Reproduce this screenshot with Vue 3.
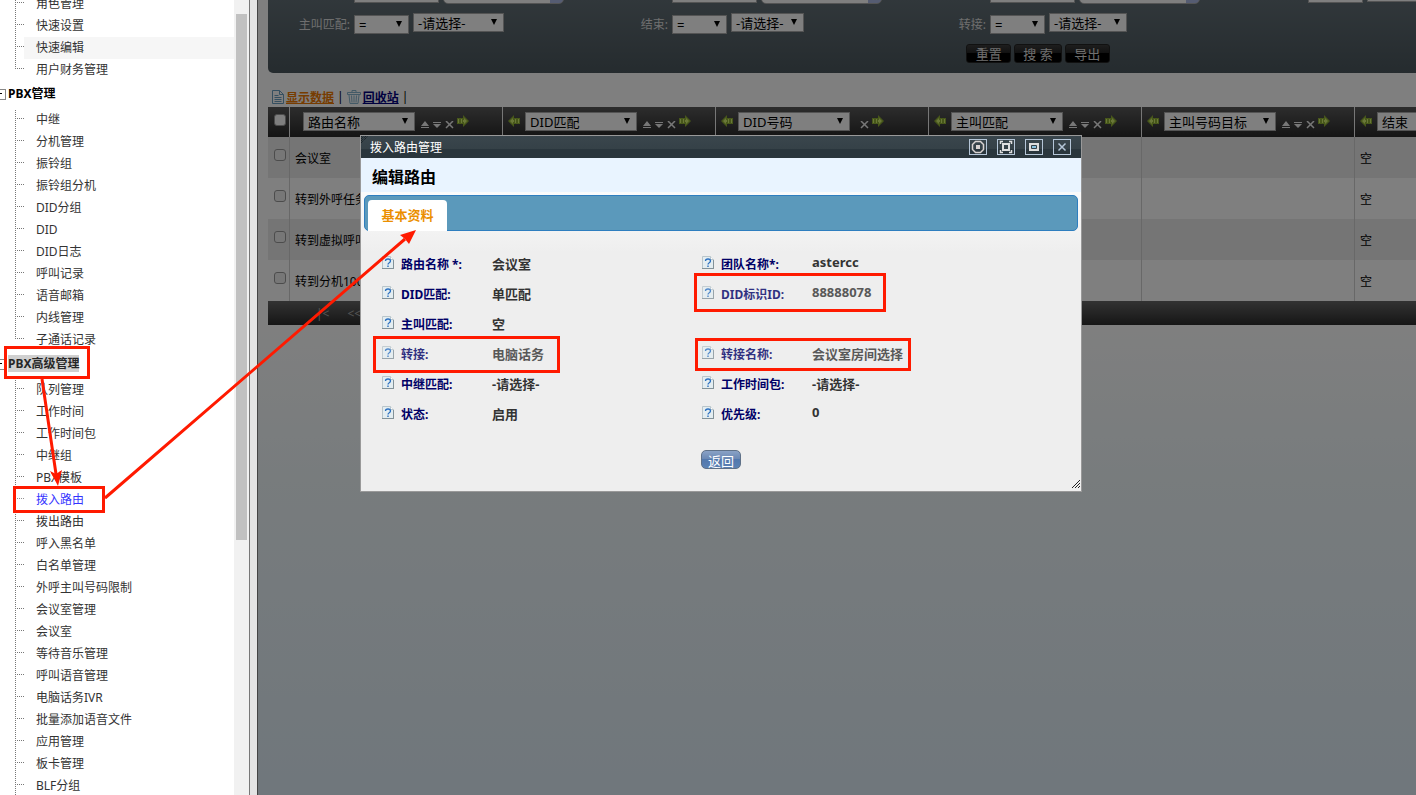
<script setup>
import { ref } from 'vue'

const menu = ref([
  {
    title: '',
    items: ['角色管理', '快速设置', '快速编辑', '用户财务管理'],
  },
  {
    title: 'PBX管理',
    items: [
      '中继', '分机管理', '振铃组', '振铃组分机', 'DID分组', 'DID',
      'DID日志', '呼叫记录', '语音邮箱', '内线管理', '子通话记录',
    ],
  },
  {
    title: 'PBX高级管理',
    selected: true,
    items: [
      '队列管理', '工作时间', '工作时间包', '中继组', 'PBX模板', '拨入路由', '拨出路由',
      '呼入黑名单', '白名单管理', '外呼主叫号码限制', '会议室管理', '会议室', '等待音乐管理',
      '呼叫语音管理', '电脑话务IVR', '批量添加语音文件', '应用管理', '板卡管理', 'BLF分组',
    ],
  },
])
const hovered = '快速编辑'
const active = '拨入路由'

const textFilters = [
  { id: 'name', label: '路由名称:' },
  { id: 'did', label: 'DID号码:' },
  { id: 'caller', label: '主叫号码:' },
]
const selectFilters = [
  { id: 'match', label: '主叫匹配:', size: 'wide' },
  { id: 'end', label: '结束:', size: 'narrow' },
  { id: 'transfer', label: '转接:', size: 'medium' },
]

const columns = [
  { name: '路由名称', sort: true },
  { name: 'DID匹配', back: true, sort: true },
  { name: 'DID号码', back: true },
  { name: '主叫匹配', back: true, sort: true },
  { name: '主叫号码目标', back: true, sort: true },
  { name: '结束', back: true, sort: true },
]
const rows = ['会议室', '转到外呼任务', '转到虚拟呼叫', '转到分机1001']

const fields = [
  { label: '路由名称 *:', value: '会议室' },
  { label: '团队名称*:', value: 'astercc', latin: true },
  { label: 'DID匹配:', value: '单匹配' },
  { label: 'DID标识ID:', value: '88888078', latin: true },
  { label: '主叫匹配:', value: '空' },
  null,
  { label: '转接:', value: '电脑话务' },
  { label: '转接名称:', value: '会议室房间选择' },
  { label: '中继匹配:', value: '-请选择-' },
  { label: '工作时间包:', value: '-请选择-' },
  { label: '状态:', value: '启用' },
  { label: '优先级:', value: '0', latin: true },
]
</script>

<template>
  <div class="page">
    <aside class="sidebar">
      <nav class="menu">
        <section v-for="(group, i) in menu" :key="i">
          <h3 v-if="group.title" class="group-title">
            <i class="toggle"></i>
            <span :class="{ selected: group.selected }">{{ group.title }}</span>
          </h3>
          <ul>
            <li v-for="item in group.items" :key="item" :class="{ hovered: item === hovered }">
              <a href="#" :class="{ active: item === active }">{{ item }}</a>
            </li>
          </ul>
        </section>
      </nav>
      <div class="scrollbar"><div class="thumb"></div></div>
    </aside>
    <div class="splitter"></div>

    <main class="main">
      <form class="filters" @submit.prevent>
        <div class="filter-grid filter-first">
          <div v-for="f in textFilters" :key="f.id" class="filter">
            <label :for="'op-' + f.id">{{ f.label }}</label>
            <span class="select op-wide">
              <select :id="'op-' + f.id"><option></option></select>
            </span>
            <span class="search-box">
              <input type="text" :aria-label="f.label" />
            </span>
          </div>
          <div class="filter">
            <label for="op-more"></label>
            <span class="select op"><select id="op-more"><option></option></select></span>
            <input class="plain" type="text" aria-label="值" />
          </div>
        </div>
        <div class="filter-grid">
          <div v-for="f in selectFilters" :key="f.id" class="filter">
            <label :for="'op-' + f.id">{{ f.label }}</label>
            <span class="select op">
              <select :id="'op-' + f.id"><option>=</option></select>
            </span>
            <span class="select" :class="f.size">
              <select :aria-label="f.label"><option>-请选择-</option></select>
            </span>
          </div>
        </div>
        <div class="filter-buttons">
          <button type="reset">重置</button>
          <button type="submit">搜 索</button>
          <button type="button">导出</button>
        </div>
      </form>

      <div class="links">
        <svg width="12" height="14" viewBox="0 0 12 14" fill="none" stroke="#6b9fc0">
          <path d="M.5.5h7l4 4v9H.5z M7.5.5v4h4 M2.5 5.5h4 M2.5 7.5h7 M2.5 9.5h7 M2.5 11.5h7" />
        </svg>
        <a href="#" class="current">显示数据</a>
        <span>|</span>
        <svg width="14" height="14" viewBox="0 0 14 14" fill="none" stroke="#86b4cf">
          <path d="M5 2V.5h4V2 M.5 2.5h13v2H.5z M2 5l1 8.500h8L12 5 M4.500 5.500l.5 7 M7 5.500v7 M9.500 5.500l-.5 7" />
        </svg>
        <a href="#">回收站</a>
        <span>|</span>
      </div>

      <table class="grid">
        <colgroup>
          <col class="col-check" />
          <col v-for="c in columns" :key="c.name" class="col-data" />
        </colgroup>
        <thead>
          <tr>
            <th><input type="checkbox" aria-label="全选" /></th>
            <th v-for="c in columns" :key="c.name">
              <div class="head" :class="{ first: !c.back }">
                <svg v-if="c.back" class="arrow" width="13" height="12" viewBox="0 0 13 12">
                  <path d="M0 6L6 0v3h6v6H6v3z" fill="#8fae35" />
                  <path d="M2 6l3-3v2h1v2H5v2z M7 4h1v4H7z M10 4h1v4h-1z" fill="#d4f070" />
                </svg>
                <span class="select column">
                  <select :aria-label="c.name"><option>{{ c.name }}</option></select>
                </span>
                <span class="tools" :class="{ short: !c.sort }">
                  <svg v-if="c.sort" width="8" height="8" viewBox="0 0 8 8" fill="#eee">
                    <path d="M4 0l4 5H0z M0 6h8v1H0z" />
                  </svg>
                  <svg v-if="c.sort" width="8" height="8" viewBox="0 0 8 8" fill="#eee">
                    <path d="M0 1h8v1H0z M0 3h8L4 7z" />
                  </svg>
                  <svg width="9" height="8" viewBox="0 0 9 8" fill="none" stroke="#eee" stroke-width="1.500">
                    <path d="M1 0l7 7 M8 0L1 7" />
                  </svg>
                </span>
                <svg class="arrow" width="13" height="12" viewBox="0 0 13 12">
                  <path d="M12 6L6 0v3H0v6h6v3z" fill="#8fae35" />
                  <path d="M10 6L7 3v2H6v2h1v2z M4 4h1v4H4z M1 4h1v4H1z" fill="#d4f070" />
                </svg>
              </div>
            </th>
          </tr>
        </thead>
        <tbody>
          <tr v-for="r in rows" :key="r">
            <td><input type="checkbox" :aria-label="r" /></td>
            <td>{{ r }}</td>
            <td></td>
            <td></td>
            <td></td>
            <td></td>
            <td>空</td>
          </tr>
        </tbody>
      </table>
      <div class="pager"><span>|&lt;</span><span>&lt;&lt;</span></div>
      <div class="mask"></div>
    </main>

    <div class="dialog" role="dialog" aria-labelledby="dialog-title">
      <header class="titlebar">
        <svg class="corner" width="7" height="7" viewBox="0 0 7 7" stroke="#11171a">
          <path d="M0 7l7-7 M0 5l5-5 M0 3l3-3 M0 1l1-1" stroke-dasharray="1 1" />
        </svg>
        <span id="dialog-title">拨入路由管理</span>
        <div class="window-buttons">
          <button type="button" aria-label="固定">
            <svg width="16" height="14" viewBox="0 0 16 14">
              <path d="M5.500 1.500h5l3 3v5l-3 3h-5l-3-3v-5z" fill="none" stroke="#d8d2d0" stroke-width="1.500" />
              <path d="M6 5h4v4H6z" fill="#d8d2d0" />
            </svg>
          </button>
          <button type="button" aria-label="最大化">
            <svg width="16" height="14" viewBox="0 0 16 14" fill="none" stroke="#dedede">
              <path d="M5 4h6v6H5z" stroke-width="2" />
              <path d="M2.500 4V1.500H5 M11 1.500h2.500V4 M13.500 10v2.500H11 M5 12.500H2.500V10" stroke-width="1.500" />
            </svg>
          </button>
          <button type="button" aria-label="最小化">
            <svg width="16" height="14" viewBox="0 0 16 14">
              <path d="M3 3h10v8H3z" fill="#dedede" />
              <path d="M5.500 5.500h5v3h-5z" fill="#8cc4e0" stroke="#354148" />
            </svg>
          </button>
          <button type="button" aria-label="关闭">
            <svg width="16" height="14" viewBox="0 0 16 14" fill="none" stroke="#b5c6d8" stroke-width="1.500">
              <path d="M4.500 3.500l7 7 M11.500 3.500l-7 7" />
            </svg>
          </button>
        </div>
      </header>
      <h2>编辑路由</h2>
      <div class="dialog-body">
        <div class="tabs" role="tablist">
          <button type="button" role="tab" aria-selected="true">基本资料</button>
        </div>
        <dl class="fields">
          <template v-for="(f, i) in fields" :key="i">
            <div v-if="f" class="field">
              <dt>
                <svg width="12" height="13" viewBox="0 0 12 13">
                  <path d="M.5.5h8l3 3v9H.5z" fill="#e3edf1" stroke="#b9c5ca" />
                  <path d="M8.500.5v3h3" fill="#fff" stroke="#b9c5ca" />
                  <path d="M0 12.500h12 M11.500 4v8" stroke="#829299" />
                  <path d="M3.500 5q0-2 2.500-2t2.500 2q0 1-1.200 1.700T6 8.500" fill="none" stroke="#2a6fc0" stroke-width="1.300" />
                  <path d="M5.300 9.500h1.400v1.500H5.300z" fill="#2a6fc0" />
                </svg>
                {{ f.label }}
              </dt>
              <dd :class="{ latin: f.latin }">{{ f.value }}</dd>
            </div>
            <div v-else></div>
          </template>
        </dl>
        <div class="dialog-actions"><button type="button">返回</button></div>
        <svg class="grip" width="8" height="8" viewBox="0 0 8 8" stroke="#222">
          <path d="M0 8l8-8 M3 8l5-5 M6 8l2-2" />
        </svg>
      </div>
    </div>

    <!-- guide marks: where to click and what to check -->
    <svg class="marks">
      <g stroke="#ff1a00" stroke-width="3">
        <rect x="5.500" y="347.500" width="83" height="30" fill="#fff" fill-opacity=".15" />
        <rect x="14.500" y="487.500" width="89" height="24" fill="#fff" fill-opacity=".2" />
        <rect x="374.500" y="337.500" width="184" height="34" fill="#eee" fill-opacity=".2" />
        <rect x="695.500" y="274.500" width="189" height="36" fill="#eee" fill-opacity=".2" />
        <rect x="696.500" y="339.500" width="213" height="30" fill="#eee" fill-opacity=".2" />
        <path d="M42 379L56 474 M105 498L405 239" />
      </g>
      <path d="M58 486L50 471l6 3 6-4z M416 230l-16 5 5 4 4 5z" fill="#ff1a00" />
    </svg>
  </div>
</template>

<style>
body {
  margin: 0;
  overflow: hidden;
}
</style>

<style scoped>
* {
  box-sizing: border-box;
}
.page {
  position: relative;
  display: flex;
  height: 100vh;
  overflow: hidden;
  background: #fff;
  color: #333;
  font-family: 'Noto Sans', 'Noto Sans CJK SC', sans-serif;
  font-size: 12px;
}
button,
input,
select {
  font-family: inherit;
  font-size: 13px;
}
ul,
dl,
dd,
h2,
h3 {
  margin: 0;
  padding: 0;
}
svg {
  display: block;
  flex: none;
}

/* sidebar */
.sidebar {
  display: flex;
  flex: 0 0 249px;
  overflow: hidden;
}
.menu {
  flex: 1;
  margin-top: -7px;
}
.menu ul {
  position: relative;
  list-style: none;
}
.menu ul::before {
  content: '';
  position: absolute;
  top: 1px;
  bottom: 12px;
  left: 15px;
  border-left: 1px dotted #777;
}
.menu section:last-child ul::before {
  bottom: 0;
}
.menu li {
  position: relative;
  height: 22px;
  margin-left: 24px;
  padding-left: 12px;
  line-height: 22px;
}
.menu li::before {
  content: '';
  position: absolute;
  top: 9px;
  left: -7px;
  width: 7px;
  border-top: 1px dotted #777;
}
.menu li.hovered {
  background: #f6f6f6;
}
.menu a {
  color: #333;
  text-decoration: none;
}
.menu a.active {
  color: #0000ff;
}
.group-title {
  display: flex;
  align-items: flex-start;
  height: 28px;
  padding-top: 4px;
  color: #000;
  font-size: 12px;
  line-height: 17px;
}
.group-title span.selected {
  background: #c8c8c8;
}
.toggle {
  position: relative;
  width: 8px;
  height: 9px;
  margin-top: 4px;
}
.toggle::before {
  content: '';
  position: absolute;
  left: -5px;
  width: 9px;
  height: 9px;
  border: 1px solid #888;
}
.toggle::after {
  content: '';
  position: absolute;
  top: 4px;
  left: -3px;
  width: 5px;
  height: 1px;
  background: #000;
}
.scrollbar {
  width: 15px;
  padding: 14px 2px 0;
  background: #f1f1f1;
}
.thumb {
  width: 11px;
  height: 526px;
  background: #c1c1c1;
}
.splitter {
  flex: 0 0 8px;
  border-left: 1px solid #777;
  background: #e4e4e4;
}

/* list page */
.main {
  position: relative;
  flex: 1;
  min-width: 0;
  overflow: hidden;
  padding-left: 10px;
  border-left: 1px solid #444;
  background: linear-gradient(#fff 320px, #f0f8fb 480px, #e0eef8);
}
.mask {
  position: absolute;
  inset: 0;
  background: rgba(0, 0, 0, 0.5);
}
.filters {
  width: 1540px;
  height: 73px;
  overflow: hidden;
  border-radius: 0 0 5px 5px;
  background: linear-gradient(#626f76, #4b575d);
  color: #ddd;
}
.filter-grid {
  display: grid;
  grid-template-columns: repeat(4, 318px);
  height: 28px;
}
.filter-first {
  height: 29px;
  margin-top: -16px;
}
.filter {
  display: flex;
  align-items: flex-start;
  gap: 4px;
}
.filter label {
  width: 82px;
  line-height: 20px;
  text-align: right;
}
.filter-grid:not(.filter-first) .filter label,
.filter .op {
  margin-top: 2px;
}
.filter-first .filter .op {
  margin-top: 0;
}
.select {
  position: relative;
  display: block;
  flex: none;
  height: 19px;
}
.select select {
  display: block;
  width: 100%;
  height: 100%;
  padding: 1px 4px 0;
  appearance: none;
  border: 1px solid #a9a9a9;
  border-radius: 0;
  background: #fff;
  color: #000;
  line-height: 17px;
}
.select::after {
  content: '';
  position: absolute;
  top: 6px;
  right: 7px;
  border-top: 6px solid #000;
  border-right: 3px solid transparent;
  border-left: 3px solid transparent;
}
.op {
  width: 55px;
}
.op-wide {
  width: 85px;
}
.wide {
  width: 91px;
}
.narrow {
  width: 73px;
}
.medium {
  width: 78px;
}
.search-box {
  width: 121px;
  height: 20px;
  overflow: hidden;
  border: 1px solid #a9a9a9;
  border-radius: 5px;
  background: linear-gradient(90deg, #fff 106px, #aab8e4 106px);
}
.search-box input {
  width: 100%;
  border: 0;
  background: transparent;
}
.plain {
  width: 85px;
  height: 18px;
  border: 1px solid #a9a9a9;
}
.filter-buttons {
  display: flex;
  justify-content: center;
  gap: 3px;
  padding-top: 3px;
}
.filter-buttons button {
  min-width: 45px;
  height: 19px;
  padding: 1px 8px 0;
  border: 1px solid #222;
  border-radius: 3px;
  background: linear-gradient(#3c3c3c, #222 50%, #000 50%);
  color: #ddd;
  line-height: 17px;
}
.links {
  display: flex;
  align-items: center;
  gap: 2px;
  height: 34px;
  padding: 13px 4px 0;
  color: #000;
}
.links a {
  color: #000080;
  font-weight: bold;
}
.links a.current {
  color: #ee7800;
}
.links span {
  margin: 0 1px;
}

.grid {
  width: 1300px;
  table-layout: fixed;
  border-spacing: 0;
}
.col-check {
  width: 22px;
}
.col-data {
  width: 213px;
}
.grid th,
.grid td {
  padding: 0;
  border-right: 1px solid #d0d0d0;
  text-align: left;
}
.grid thead {
  background: linear-gradient(#5a5a5a, #2a2a2a);
}
.grid th {
  height: 30px;
  border-color: #eee;
  vertical-align: top;
}
.grid td {
  height: 41px;
  padding-left: 5px;
  color: #000;
}
.grid tbody tr:nth-child(odd) {
  background: #eaeaea;
}
.grid td:first-child {
  padding-left: 6px;
  vertical-align: top;
}
.grid input {
  display: block;
  width: 12px;
  height: 12px;
  margin: 12px 0 0;
  appearance: none;
  border: 1px solid #999;
  border-radius: 3px;
  background: #eee;
}
.grid th input {
  margin: 7px 0 0 6px;
  background: #fff;
}
.head {
  display: flex;
  padding: 5px 0 0 5px;
}
.head.first {
  padding-left: 13px;
}
.head .arrow {
  margin-top: 3px;
}
.column {
  width: 112px;
  margin-left: 4px;
}
.head.first .column {
  margin-left: 0;
}
.tools {
  display: flex;
  gap: 4px;
  margin: 9px 3px 0 6px;
}
.tools.short {
  margin-left: 10px;
}
.pager {
  display: flex;
  gap: 18px;
  width: 1300px;
  height: 24px;
  padding-left: 48px;
  background: linear-gradient(#666, #2c2c2c);
  color: #aaa;
  line-height: 26px;
}

/* dialog */
.dialog {
  position: absolute;
  top: 135px;
  left: 360px;
  width: 722px;
  border: 1px solid #999;
  background: #eee;
}
.titlebar {
  position: relative;
  display: flex;
  align-items: center;
  justify-content: space-between;
  height: 22px;
  padding: 0 10px 0 9px;
  background: linear-gradient(#3a464d, #354147 60%, #2a363d 60%);
  color: #fff;
}
.corner {
  position: absolute;
  top: 0;
  left: 0;
}
.window-buttons {
  display: flex;
  gap: 10px;
}
.window-buttons button {
  width: 18px;
  height: 16px;
  padding: 0;
  border: 1px solid #b5c6d8;
  background: transparent;
}
.dialog h2 {
  height: 34px;
  padding-left: 11px;
  background: #e9f4ff;
  color: #000;
  font-size: 16px;
  line-height: 38px;
}
.dialog-body {
  position: relative;
  padding: 3px 3px 22px;
  background: linear-gradient(#fbfbfb, #eee 60px);
}
.tabs {
  height: 36px;
  padding: 4px 0 0 3px;
  border: 1px solid #2e7ebf;
  border-radius: 5px;
  background: #5b99bb;
}
.tabs button {
  display: block;
  width: 79px;
  height: 31px;
  padding: 0 0 2px;
  border: 0;
  border-radius: 4px 4px 0 0;
  background: #fff;
  color: #eb8f00;
  font-weight: bold;
}
.fields {
  display: grid;
  grid-template-columns: 320px 320px;
  padding: 18px 0 21px 18px;
}
.field {
  display: flex;
  height: 30px;
  line-height: 30px;
}
.field dt {
  display: flex;
  width: 110px;
  gap: 7px;
  color: #000066;
  font-weight: bold;
  line-height: 32px;
}
.field dt svg {
  margin-top: 7px;
}
.field dd {
  font-size: 13px;
  font-weight: bold;
}
.field dd.latin {
  line-height: 26px;
}
.dialog-actions {
  text-align: center;
}
.dialog-actions button {
  display: inline-block;
  width: 40px;
  height: 19px;
  padding: 2px 0 0;
  border: 1px solid #5f7188;
  border-radius: 5px;
  background: linear-gradient(#8aa2c6, #6886b2 50%, #5278ad 50%, #5c82b4);
  color: #fff;
  line-height: 17px;
  vertical-align: top;
}
.grip {
  position: absolute;
  right: 1px;
  bottom: 3px;
}
.marks {
  position: absolute;
  top: 0;
  left: 0;
  width: 100%;
  height: 100%;
  pointer-events: none;
}
</style>
